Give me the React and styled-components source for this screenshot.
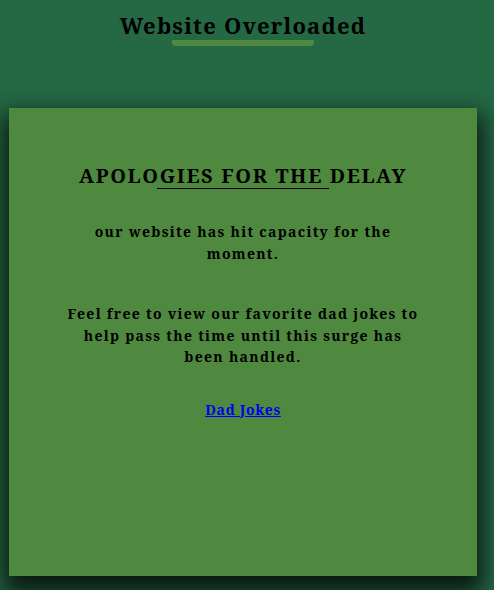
import React from "react";
import styled, { createGlobalStyle } from "styled-components";

const GlobalStyle = createGlobalStyle`
  html, body {
    margin: 0;
    padding: 0;
    background-color: #246844;
    min-height: 590px;
    overflow: hidden;
  }
  body {
    font-family: "Noto Serif", "DejaVu Serif", serif;
  }
`;

const Page = styled.div`
  padding: 0 17px 0 9px;
  min-height: 590px;
  box-sizing: border-box;
`;

const Header = styled.header`
  display: flex;
  flex-direction: column;
  align-items: center;
  padding-top: 11px;
`;

const Title = styled.h1`
  margin: 0;
  font-size: 22px;
  font-weight: 700;
  letter-spacing: 1.2px;
  color: #000;
  line-height: 29px;
`;

const TitleBar = styled.div`
  width: 142px;
  height: 6px;
  border-radius: 0 0 4px 4px;
  background-color: #4f883f;
`;

const Card = styled.main`
  margin-top: 62px;
  height: 468px;
  background-color: #4f883f;
  box-shadow: 0 12px 22px 6px rgba(0, 0, 0, 0.75);
  display: flex;
  flex-direction: column;
  align-items: center;
  padding: 55px 50px 0;
  box-sizing: border-box;
  text-align: center;
`;

const Heading = styled.h2`
  position: relative;
  margin: 0;
  font-size: 20px;
  font-weight: 700;
  letter-spacing: 1.65px;
  color: #000;
  line-height: 26px;
  &::after {
    content: "";
    position: absolute;
    left: 50%;
    bottom: 0;
    width: 172px;
    height: 1px;
    margin-left: -86px;
    background-color: #000;
  }
`;

const Text = styled.p`
  margin: ${(p) => p.$top}px 0 0;
  max-width: 355px;
  font-size: 14px;
  font-weight: 700;
  letter-spacing: 1.3px;
  line-height: 21.5px;
  color: #000;
`;

const JokeLink = styled.a`
  margin-top: 32px;
  font-size: 14px;
  font-weight: 700;
  letter-spacing: 0.7px;
  line-height: 20px;
  color: #0000ee;
  text-decoration: underline;
`;

export default function App() {
  return (
    <Page>
      <GlobalStyle />
      <Header>
        <Title>Website Overloaded</Title>
        <TitleBar />
      </Header>
      <Card>
        <Heading>APOLOGIES FOR THE DELAY</Heading>
        <Text $top={32}>our website has hit capacity for the moment.</Text>
        <Text $top={39}>
          Feel free to view our favorite dad jokes to help pass the time until
          this surge has been handled.
        </Text>
        <JokeLink href="#">Dad Jokes</JokeLink>
      </Card>
    </Page>
  );
}
